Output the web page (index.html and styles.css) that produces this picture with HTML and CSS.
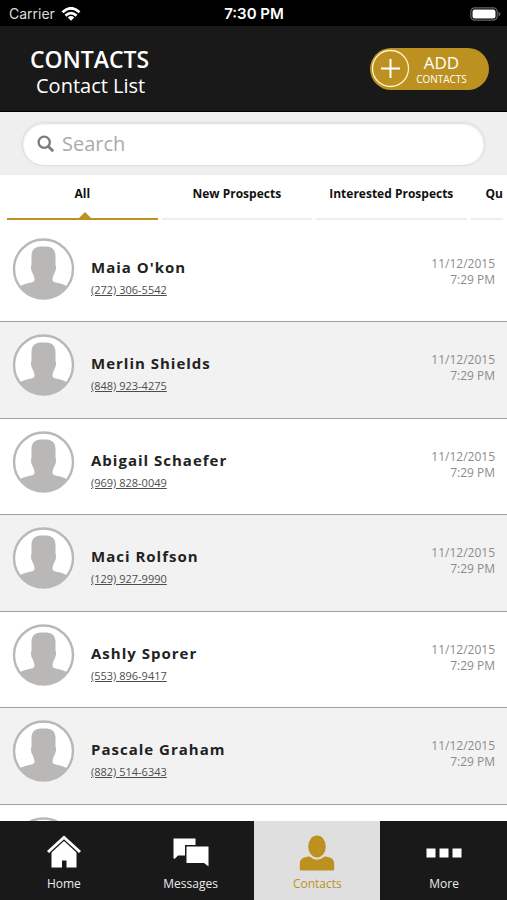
FILE: index.html
```html
<!DOCTYPE html>
<html lang="en">
<head>
<meta charset="utf-8">
<meta name="viewport" content="width=device-width, initial-scale=1">
<title>Contacts</title>
<link rel="stylesheet" href="styles.css">
</head>
<body>
<svg class="defs" aria-hidden="true">
  <symbol id="avatar" viewBox="0 0 62 62">
    <circle cx="31" cy="31" r="29.5" fill="#fff" stroke="#b9b8b7" stroke-width="2.4"/>
    <path fill="#b9b8b7" d="M28 8.500H34C39.500 8.500 43 12 43 18V27C44 28 43.500 33 42 35C41 37 40 39 40 42C40 45.500 49 44.500 55 48.500A29.500 29.500 0 0 1 7 48.500C13 44.500 22 45.500 22 42C22 39 21 37 20 35C18.500 33 18 28 19 27V18C19 12 22.500 8.500 28 8.500Z"/>
  </symbol>
</svg>
<div class="status">
  <div class="carrier">Carrier
    <svg width="20" height="14" viewBox="0 0 20 14" aria-hidden="true"><g fill="none" stroke="#fff" stroke-width="2.800"><path d="M1.500 5.200Q10-2.600 18.500 5.200"/><path d="M4.500 8.600Q10 3.600 15.500 8.600"/></g><path fill="#fff" d="M6.800 10.400Q10 7.700 13.200 10.400L10 13.700Z"/></svg>
  </div>
  <div class="clock">7:30 PM</div>
  <svg class="battery" width="31" height="14" viewBox="0 0 31 14" aria-hidden="true"><rect x=".8" y=".8" width="26.400" height="12.400" rx="4" fill="none" stroke="#666" stroke-width="1.200"/><rect x="2.500" y="2.500" width="23" height="9" rx="2.300" fill="#fff"/><path fill="#666" d="M28.500 4.800Q30.500 5.500 30.500 7T28.500 9.200Z"/></svg>
</div>
<header class="header">
  <div class="titles">
    <h1>CONTACTS</h1>
    <p>Contact List</p>
  </div>
  <button class="add" type="button">
    <svg width="39" height="39" viewBox="0 0 39 39" aria-hidden="true"><circle cx="19.500" cy="19.500" r="18" fill="none" stroke="#fff1cf" stroke-width="1.300"/><path d="M10 19.500H29M19.500 10V29" stroke="#fff" stroke-width="2"/></svg>
    <span class="add-text"><span class="add-big">ADD</span><span class="add-small">CONTACTS</span></span>
  </button>
</header>
<div class="search">
  <label class="search-box">
    <svg width="18" height="18" viewBox="0 0 18 18" aria-label="Search"><circle cx="7.200" cy="7.200" r="5.600" fill="none" stroke="#7c7c7c" stroke-width="2.300"/><path d="M11.200 11.200L16.200 16.200" stroke="#7c7c7c" stroke-width="2.800"/></svg>
    <input type="text" placeholder="Search">
  </label>
</div>
<nav class="tabs">
  <a class="tab active" href="#all">All</a>
  <a class="tab" href="#new">New Prospects</a>
  <a class="tab" href="#interested">Interested Prospects</a>
  <a class="tab cut" href="#qu">Qu</a>
</nav>
<main class="list">
  <article class="row"><svg class="avatar"><use href="#avatar"/></svg><div class="who"><h2>Maia O'kon</h2><a href="tel:2723065542">(272) 306-5542</a></div><time>11/12/2015<br>7:29 PM</time></article>
  <article class="row"><svg class="avatar"><use href="#avatar"/></svg><div class="who"><h2>Merlin Shields</h2><a href="tel:8489234275">(848) 923-4275</a></div><time>11/12/2015<br>7:29 PM</time></article>
  <article class="row"><svg class="avatar"><use href="#avatar"/></svg><div class="who"><h2>Abigail Schaefer</h2><a href="tel:9698280049">(969) 828-0049</a></div><time>11/12/2015<br>7:29 PM</time></article>
  <article class="row"><svg class="avatar"><use href="#avatar"/></svg><div class="who"><h2>Maci Rolfson</h2><a href="tel:1299279990">(129) 927-9990</a></div><time>11/12/2015<br>7:29 PM</time></article>
  <article class="row"><svg class="avatar"><use href="#avatar"/></svg><div class="who"><h2>Ashly Sporer</h2><a href="tel:5538969417">(553) 896-9417</a></div><time>11/12/2015<br>7:29 PM</time></article>
  <article class="row"><svg class="avatar"><use href="#avatar"/></svg><div class="who"><h2>Pascale Graham</h2><a href="tel:8825146343">(882) 514-6343</a></div><time>11/12/2015<br>7:29 PM</time></article>
  <article class="row"><svg class="avatar"><use href="#avatar"/></svg></article>
</main>
<nav class="bottom">
  <a href="#home"><svg width="36" height="36" viewBox="0 0 36 36" aria-hidden="true"><path fill="#fff" d="M18 .500L35 16L33 18L18 4.200L3 18L1 16Z"/><path fill="#fff" d="M18 6L30.500 17.500V32.500H20.500V25.500H16V32.500H5.500V17.500Z"/></svg>Home</a>
  <a href="#messages"><svg width="36" height="36" viewBox="0 0 36 36" aria-hidden="true"><path fill="#fff" d="M.500 3.500H22.500V10H12V20.500H5L1.500 24L.500 23Z"/><path fill="#fff" d="M13.500 11.500H35.500V31.500L31 28H13.500Z"/></svg>Messages</a>
  <a class="current" href="#contacts"><svg width="36" height="36" viewBox="0 0 36 36" aria-hidden="true"><ellipse cx="18" cy="11.500" rx="8.800" ry="11"/><path d="M.800 35V29C.800 24 4 22 10.500 21.500Q18 28 25.500 21.500C32 22 35.200 24 35.200 29V35Q34 35.500 33 35.500H3Q1.500 35.500 .800 35Z"/></svg>Contacts</a>
  <a href="#more"><svg width="36" height="36" viewBox="0 0 36 36" aria-hidden="true"><path fill="#fff" d="M.500 13.500H9.500V22.500H.500ZM13.500 13.500H22.500V22.500H13.500ZM26.500 13.500H35.500V22.500H26.500Z"/></svg>More</a>
</nav>
</body>
</html>
```
FILE: styles.css
```css
* { box-sizing: border-box; }

body {
  margin: 0;
  height: 100vh;
  display: flex;
  flex-direction: column;
  overflow: hidden;
  background: #fff;
  font-family: "Open Sans", sans-serif;
  color: #222;
}

h1, h2, p { margin: 0; }
a { color: inherit; text-decoration: none; }
svg { flex: none; }

.defs { position: absolute; width: 0; height: 0; }

.status {
  display: grid;
  grid-template-columns: 1fr auto 1fr;
  align-items: center;
  flex: none;
  height: 26px;
  padding: 1px 6px 0 9px;
  background: #000;
  color: #fff;
  font-family: Inter, sans-serif;
  font-size: 14px;
}

.carrier { display: flex; align-items: center; gap: 6px; color: #ddd; }
.clock { padding-right: 2px; font-size: 15px; font-weight: 600; }
.battery { justify-self: end; }

.header {
  display: flex;
  justify-content: space-between;
  align-items: center;
  flex: none;
  height: 86px;
  padding: 0 18px 0 30px;
  border-bottom: 1px solid #000;
  background: #191919;
  color: #fff;
}

.titles { padding-top: 6px; }
.titles h1 { font-size: 23px; line-height: 28px; font-weight: 600; }
.titles p { padding-left: 6px; font-size: 20px; line-height: 26px; }

.add {
  display: flex;
  align-items: center;
  width: 119px;
  height: 42px;
  padding: 0 0 0 1px;
  border: 0;
  border-radius: 21px;
  background: #bd9120;
  color: #fff;
  font-family: inherit;
}

.add-text { display: flex; flex-direction: column; flex: 1; padding: 2px 16px 0 0; align-items: center; }
.add-big { font-size: 17px; line-height: 18px; }
.add-small { font-size: 10px; line-height: 14px; }

.search { flex: none; padding: 10px 22px 9px; background: #efefef; }

.search-box {
  display: flex;
  align-items: center;
  gap: 7px;
  height: 44px;
  padding: 0 14px;
  border: 1px solid #e0e0e0;
  border-radius: 22px;
  background: #fff;
  box-shadow: inset 0 1px 2px #ddd, 0 0 2px #ddd;
}

.search-box input {
  flex: 1;
  min-width: 0;
  padding: 0;
  border: 0;
  outline: 0;
  background: transparent;
  font: 20px/28px "Open Sans", sans-serif;
}
.search-box input::placeholder { color: #aaa; opacity: 1; }

.tabs { display: flex; gap: 4px; flex: none; padding: 0 4px 0 7px; }

.tab {
  position: relative;
  flex: 1;
  height: 45px;
  padding-top: 10px;
  border-bottom: 2px solid #eee;
  color: #111;
  font-size: 12px;
  line-height: 18px;
  font-weight: 700;
  text-align: center;
  white-space: nowrap;
}
.tab.active { border-color: #bd9120; }
.tab.active::after {
  content: "";
  position: absolute;
  bottom: 0;
  left: calc(50% - 3px);
  border: 6px solid transparent;
  border-top: 0;
  border-bottom-color: #bd9120;
}
.tab.cut { flex: 0 0 32px; padding-left: 15px; text-align: left; }

.list { flex: 1; min-height: 0; overflow: hidden; padding-top: 6px; }

.row {
  display: flex;
  align-items: flex-start;
  height: 96px;
  padding: 12px 12px 0;
  border-bottom: 1px solid #a0a0a0;
}
.row:nth-child(even) { height: 97px; background: #f2f2f2; }

.avatar { width: 63px; height: 62px; }
.who { flex: 1; padding: 18px 0 0 16px; }
.who h2 { font-size: 15px; line-height: 22px; font-weight: 700; letter-spacing: 1px; }
.who a { display: block; color: #4d4d4d; font-size: 11px; line-height: 24px; text-decoration: underline; }
.row time { padding-top: 18px; color: #8c8c8c; font-size: 12px; line-height: 16px; text-align: right; }

.bottom { display: grid; grid-template-columns: repeat(4, 1fr); flex: none; height: 79px; background: #191919; }
.bottom a {
  display: flex;
  flex-direction: column;
  align-items: center;
  gap: 4px;
  padding: 14px 0 0 1px;
  color: #ececec;
  font-size: 12px;
  line-height: 18px;
}
.bottom .current { background: #dfdfdf; color: #bd9120; fill: #bd9120; }
```
